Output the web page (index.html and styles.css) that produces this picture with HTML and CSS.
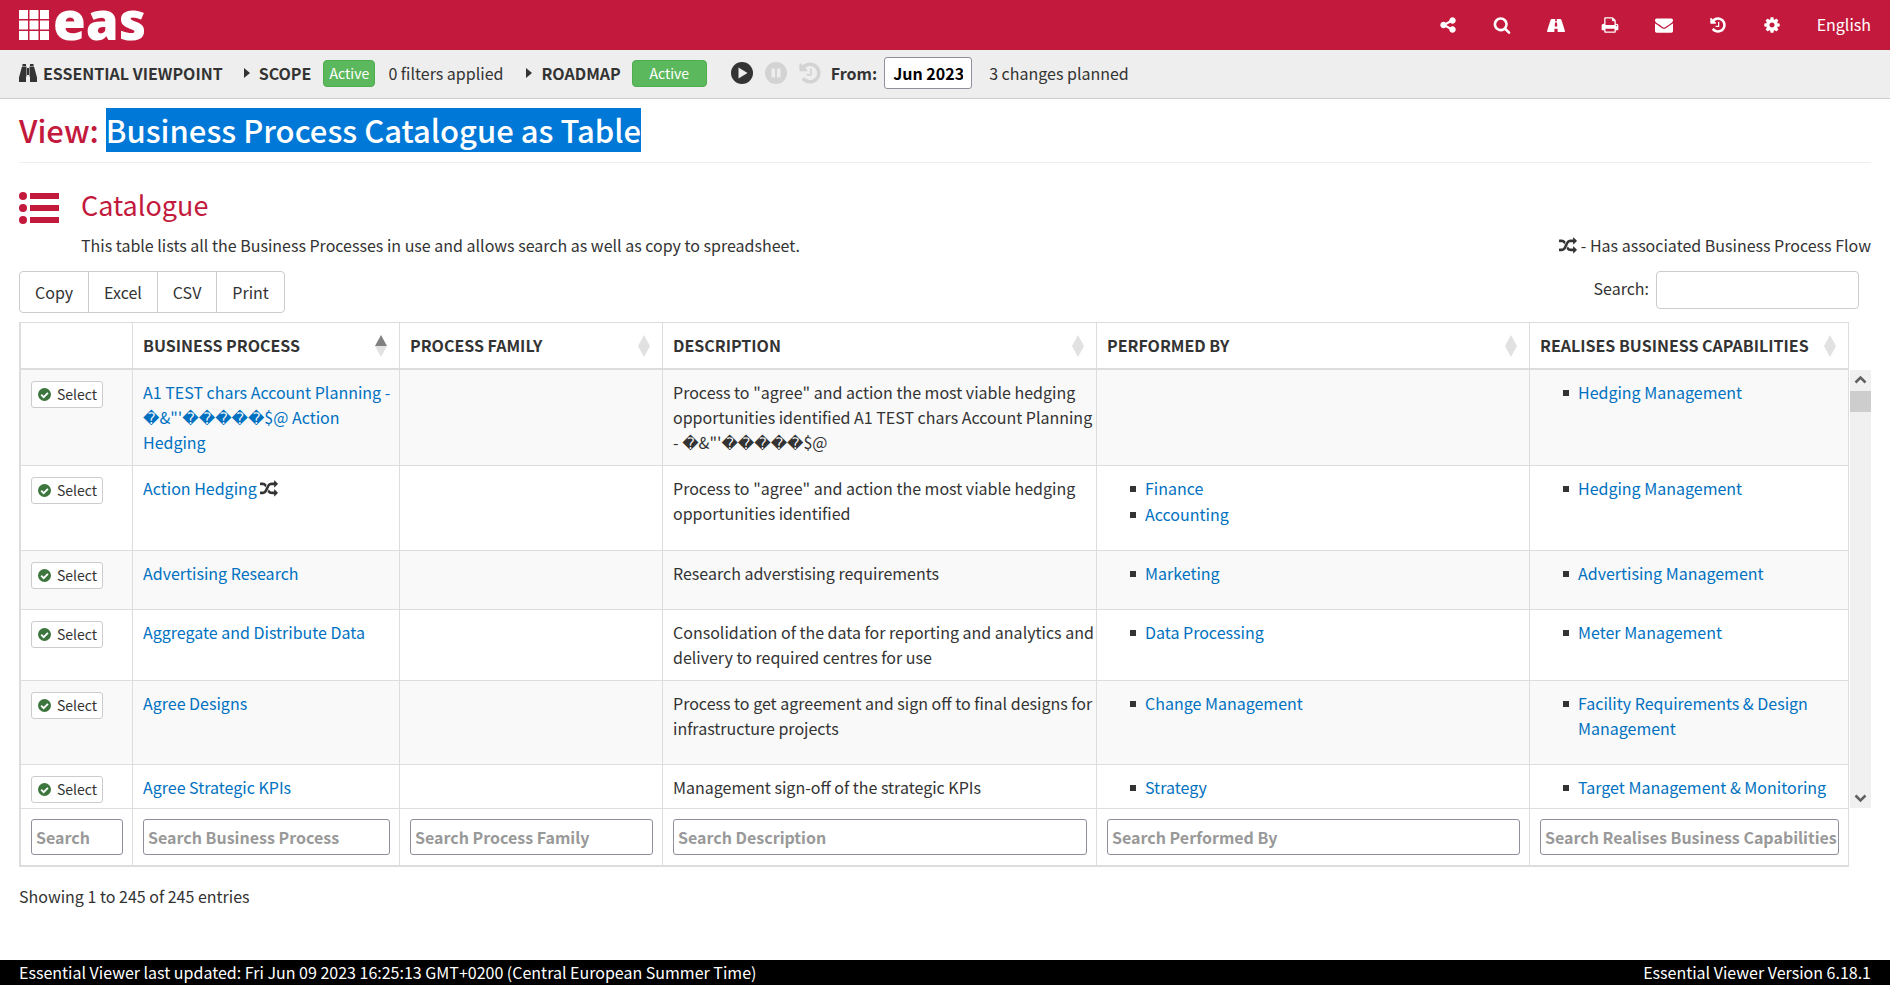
FILE: index.html
```html
<!DOCTYPE html>
<html lang="en">
<head>
<meta charset="utf-8">
<title>Business Process Catalogue as Table</title>
<link rel="stylesheet" href="styles.css">
</head>
<body>
<svg class="sprite" aria-hidden="true">
  <symbol id="share" viewBox="0 0 1792 1792"><path d="M1344 1024q133 0 226.5 93.5t93.5 226.5-93.5 226.5-226.5 93.5-226.5-93.5-93.5-226.5q0-12 2-34l-360-180q-92 86-218 86-133 0-226.5-93.5t-93.5-226.5 93.5-226.5 226.5-93.5q126 0 218 86l360-180q-2-22-2-34 0-133 93.5-226.5t226.5-93.5 226.5 93.5 93.5 226.5-93.5 226.5-226.5 93.5q-126 0-218-86l-360 180q2 22 2 34t-2 34l360 180q92-86 218-86z"/></symbol>
  <symbol id="search" viewBox="0 0 1792 1792"><path d="M1216 832q0-185-131.5-316.5t-316.5-131.5-316.5 131.5-131.5 316.5 131.5 316.5 316.5 131.5 316.5-131.5 131.5-316.5zm512 832q0 52-38 90t-90 38q-54 0-90-38l-343-342q-179 124-399 124-143 0-273.5-55.5t-225-150-150-225-55.5-273.5 55.5-273.5 150-225 225-150 273.5-55.5 273.5 55.5 225 150 150 225 55.5 273.5q0 220-124 399l343 343q37 37 37 90z"/></symbol>
  <symbol id="road" viewBox="0 0 18 18"><path fill-rule="evenodd" d="M4.600 3h3.700l-.2 2.200h1.800L9.700 3h3.700q.7 0 1 .8l3.400 10.600q.4 1.600-.7 1.600h-6.400l-.2-3.200h-3L7.300 16H.9q-1.100 0-.7-1.600L3.600 3.800q.3-.8 1-.8zM8 6.600l-.3 3.800h2.600L10 6.600z"/></symbol>
  <symbol id="print" viewBox="0 0 1792 1792"><path d="M448 1536h896v-256h-896v256zm0-640h896v-384h-160q-40 0-68-28t-28-68v-160h-640v640zm1152 64q0-26-19-45t-45-19-45 19-19 45 19 45 45 19 45-19 19-45zm128 0v416q0 13-9.500 22.500t-22.500 9.500h-224v160q0 40-28 68t-68 28h-960q-40 0-68-28t-28-68v-160h-224q-13 0-22.500-9.500t-9.500-22.500v-416q0-79 56.500-135.500t135.500-56.500h64v-544q0-40 28-68t68-28h672q40 0 88 20t76 48l152 152q28 28 48 76t20 88v256h64q79 0 135.500 56.500t56.500 135.500z"/></symbol>
  <symbol id="mail" viewBox="0 0 1792 1792"><path d="M1792 710v794q0 66-47 113t-113 47h-1472q-66 0-113-47t-47-113v-794q44 49 101 87 362 246 497 345 57 42 92.500 65.500t94.500 48 110 24.500h2q51 0 110-24.500t94.500-48 92.500-65.500q170-123 498-345 57-39 100-87zm0-294q0 79-49 151t-122 123q-376 261-468 325-10 7-42.500 31t-54 38.500-52 32.500-57.500 27-50 9h-2q-23 0-50-9t-57.500-27-52-32.500-54-38.500-42.500-31q-91-64-262-182.500t-205-142.500q-62-42-117-115.500t-55-136.500q0-78 41.500-130t118.500-52h1472q65 0 112.500 47t47.500 113z"/></symbol>
  <symbol id="history" viewBox="0 0 1792 1792"><path d="M1664 896q0 156-61 298t-164 245-245 164-298 61q-172 0-327-72.500t-264-204.500q-7-10-6.500-22.500t8.500-20.500l137-138q10-9 25-9 16 2 23 12 73 95 179 147t225 52q104 0 198.500-40.500t163.500-109.500 109.500-163.500 40.500-198.500-40.500-198.500-109.500-163.500-163.500-109.500-198.500-40.500q-98 0-188 35.500t-160 101.500l137 138q31 30 14 69-17 40-59 40h-448q-26 0-45-19t-19-45v-448q0-42 40-59 39-17 69 14l130 129q107-101 244.500-156.500t284.500-55.500q156 0 298 61t245 164 164 245 61 298zm-640-288v448q0 14-9 23t-23 9h-320q-14 0-23-9t-9-23v-64q0-14 9-23t23-9h224v-352q0-14 9-23t23-9h64q14 0 23 9t9 23z"/></symbol>
  <symbol id="cog" viewBox="0 0 1792 1792"><path d="M1152 896q0-106-75-181t-181-75-181 75-75 181 75 181 181 75 181-75 75-181zm512-109v222q0 12-8 23t-20 13l-185 28q-19 54-39 91 35 50 107 138 10 12 10 25t-9 23q-27 37-99 108t-94 71q-12 0-26-9l-138-108q-44 23-91 38-16 136-29 186-7 28-36 28h-222q-14 0-24.500-8.500t-11.500-21.500l-28-184q-49-16-90-37l-141 107q-10 9-25 9-14 0-25-11-126-114-165-168-7-10-7-23 0-12 8-23 15-21 51-66.500t54-70.500q-27-50-41-99l-183-27q-13-2-21-12.500t-8-23.500v-222q0-12 8-23t19-13l186-28q14-46 39-92-40-57-107-138-10-12-10-24 0-10 9-23 26-36 98.500-107.500t94.500-71.500q13 0 26 10l138 107q44-23 91-38 16-136 29-186 7-28 36-28h222q14 0 24.500 8.500t11.500 21.500l28 184q49 16 90 37l142-107q9-9 24-9 13 0 25 10 129 119 165 170 7 8 7 22 0 12-8 23-15 21-51 66.500t-54 70.500q26 50 41 98l183 28q13 2 21 12.500t8 23.500z"/></symbol>
  <symbol id="random" viewBox="0 0 1792 1792"><path d="M666 481q-60 92-137 273-22-45-37-72.500t-40.500-63.500-51-56.500-63-35-81.500-14.500h-224q-14 0-23-9t-9-23v-192q0-14 9-23t23-9h224q250 0 410 225zm1126 799q0 14-9 23l-320 320q-9 9-23 9-13 0-22.500-9.500t-9.500-22.500v-192q-32 0-85 .5t-81 1-73-1-71-5-64-10.500-63-18.500-58-28.500-59-40-55-53.500-56-69.500q59-93 136-273 22 45 37 72.500t40.500 63.500 51 56.500 63 35 81.500 14.500h256v-192q0-14 9-23t23-9q12 0 24 10l319 319q9 9 9 23zm0-896q0 14-9 23l-320 320q-9 9-23 9-13 0-22.500-9.500t-9.500-22.500v-192h-256q-48 0-87 15t-69 45-51 61.500-45 77.500q-32 62-78 171-29 66-49.500 111t-54 105-64 100-74 83-90 68.500-106.500 42-128 16.500h-224q-14 0-23-9t-9-23v-192q0-14 9-23t23-9h224q48 0 87-15t69-45 51-61.500 45-77.500q32-62 78-171 29-66 49.500-111t54-105 64-100 74-83 90-68.500 106.500-42 128-16.500h256v-192q0-14 9-23t23-9q12 0 24 10l319 319q9 9 9 23z"/></symbol>
  <symbol id="check" viewBox="0 0 14 14"><circle cx="7" cy="7" r="7"/><path d="M3.400 7.200l2.700 2.700 4.600-4.700" fill="none" stroke="#fff" stroke-width="2"/></symbol>
  <symbol id="binoculars" viewBox="0 0 18 18"><path d="M3.500 0h3.500v2H3.500zM11 0h3.500v2H11zM3 2.600h4.500v10H7V18H0v-4.500zM10.500 2.600H15l3 10.900V18h-7v-5.400h-.5zM8 4h2v7H8z"/></symbol>
  <symbol id="play" viewBox="0 0 22 22"><circle cx="11" cy="11" r="11"/><path d="M7.500 5.500v11l9-5.500z" fill="#eee"/></symbol>
  <symbol id="pause" viewBox="0 0 22 22"><circle cx="11" cy="11" r="11"/><path d="M6.500 6.500H10v9H6.500zM12 6.500h3.500v9H12z" fill="#eee"/></symbol>
  <symbol id="list" viewBox="0 0 40 32"><circle cx="4" cy="4" r="4"/><circle cx="4" cy="16" r="4"/><circle cx="4" cy="28" r="4"/><path d="M11 1h29v6H11zM11 13h29v6H11zM11 25h29v6H11z"/></symbol>
</svg>

<header class="topbar">
  <a class="logo" href="#" aria-label="eas home">
    <svg class="logo-grid" viewBox="0 0 30 30" aria-hidden="true"><path d="M0 0h9v9H0zM10.500 0h9v9h-9zM21 0h9v9h-9zM0 10.500h9v9H0zM10.500 10.500h9v9h-9zM21 10.500h9v9h-9zM0 21h9v9H0zM10.500 21h9v9h-9zM21 21h9v9h-9z"/></svg>
    <span class="logo-text">eas</span>
  </a>
  <nav class="topnav">
    <a href="#" aria-label="Share"><svg class="icon"><use href="#share"/></svg></a>
    <a href="#" aria-label="Search"><svg class="icon"><use href="#search"/></svg></a>
    <a href="#" aria-label="Roadmap"><svg class="icon"><use href="#road"/></svg></a>
    <a href="#" aria-label="Print"><svg class="icon"><use href="#print"/></svg></a>
    <a href="#" aria-label="Mail"><svg class="icon"><use href="#mail"/></svg></a>
    <a href="#" aria-label="History"><svg class="icon"><use href="#history"/></svg></a>
    <a href="#" aria-label="Settings"><svg class="icon"><use href="#cog"/></svg></a>
    <a href="#">English</a>
  </nav>
</header>

<section class="viewbar">
  <svg class="icon"><use href="#binoculars"/></svg>
  <strong class="viewbar-title">ESSENTIAL VIEWPOINT</strong>
  <span class="caret"></span>
  <strong class="scope">SCOPE</strong>
  <button class="active-btn">Active</button>
  <span class="filters">0 filters applied</span>
  <span class="caret"></span>
  <strong class="roadmap">ROADMAP</strong>
  <button class="active-btn wide">Active</button>
  <div class="player">
    <button aria-label="Play"><svg><use href="#play"/></svg></button>
    <button class="off" aria-label="Pause"><svg><use href="#pause"/></svg></button>
    <button class="off" aria-label="Reset"><svg viewBox="1 1 16 16"><use href="#history" width="18" height="18"/></svg></button>
  </div>
  <label class="from" for="from">From:</label>
  <input class="date" id="from" value="Jun 2023">
  <span>3 changes planned</span>
</section>

<main>
  <h1><span>View: </span><mark>Business Process Catalogue as Table</mark></h1>
  <section class="intro">
    <svg class="list-icon"><use href="#list"/></svg>
    <div class="intro-body">
      <h2>Catalogue</h2>
      <div class="intro-line">
        <p>This table lists all the Business Processes in use and allows search as well as copy to spreadsheet.</p>
        <p class="legend"><svg class="icon"><use href="#random"/></svg> - Has associated Business Process Flow</p>
      </div>
    </div>
  </section>

  <div class="tools">
    <div class="btn-group"><button>Copy</button><button>Excel</button><button>CSV</button><button>Print</button></div>
    <label class="search">Search: <input type="search"></label>
  </div>

  <div class="grid">
    <div class="scroller">
    <table>
      <colgroup><col class="c1"><col class="c2"><col class="c3"><col class="c4"><col class="c5"><col class="c6"></colgroup>
      <thead>
        <tr>
          <th></th>
          <th><div class="head">BUSINESS PROCESS<span class="sort asc"></span></div></th>
          <th><div class="head">PROCESS FAMILY<span class="sort"></span></div></th>
          <th><div class="head">DESCRIPTION<span class="sort"></span></div></th>
          <th><div class="head">PERFORMED BY<span class="sort"></span></div></th>
          <th><div class="head">REALISES BUSINESS CAPABILITIES<span class="sort"></span></div></th>
        </tr>
      </thead>
      <tbody>
        <tr>
          <td><button class="select"><svg><use href="#check"/></svg>Select</button></td>
          <td><a href="#">A1 TEST chars Account Planning - �&amp;"'�����$@ Action Hedging</a></td>
          <td></td>
          <td>Process to "agree" and action the most viable hedging opportunities identified A1 TEST chars Account Planning - �&amp;"'�����$@</td>
          <td></td>
          <td><ul><li><a href="#">Hedging Management</a></li></ul></td>
        </tr>
        <tr>
          <td><button class="select"><svg><use href="#check"/></svg>Select</button></td>
          <td><a href="#">Action Hedging</a> <svg class="icon flow"><use href="#random"/></svg></td>
          <td></td>
          <td>Process to "agree" and action the most viable hedging opportunities identified</td>
          <td><ul><li><a href="#">Finance</a></li><li><a href="#">Accounting</a></li></ul></td>
          <td><ul><li><a href="#">Hedging Management</a></li></ul></td>
        </tr>
        <tr>
          <td><button class="select"><svg><use href="#check"/></svg>Select</button></td>
          <td><a href="#">Advertising Research</a></td>
          <td></td>
          <td>Research adverstising requirements</td>
          <td><ul><li><a href="#">Marketing</a></li></ul></td>
          <td><ul><li><a href="#">Advertising Management</a></li></ul></td>
        </tr>
        <tr>
          <td><button class="select"><svg><use href="#check"/></svg>Select</button></td>
          <td><a href="#">Aggregate and Distribute Data</a></td>
          <td></td>
          <td>Consolidation of the data for reporting and analytics and delivery to required centres for use</td>
          <td><ul><li><a href="#">Data Processing</a></li></ul></td>
          <td><ul><li><a href="#">Meter Management</a></li></ul></td>
        </tr>
        <tr>
          <td><button class="select"><svg><use href="#check"/></svg>Select</button></td>
          <td><a href="#">Agree Designs</a></td>
          <td></td>
          <td>Process to get agreement and sign off to final designs for infrastructure projects</td>
          <td><ul><li><a href="#">Change Management</a></li></ul></td>
          <td><ul><li><a href="#">Facility Requirements &amp; Design Management</a></li></ul></td>
        </tr>
        <tr class="last">
          <td><button class="select"><svg><use href="#check"/></svg>Select</button></td>
          <td><a href="#">Agree Strategic KPIs</a></td>
          <td></td>
          <td>Management sign-off of the strategic KPIs</td>
          <td><ul><li><a href="#">Strategy</a></li></ul></td>
          <td><ul><li><a href="#">Target Management &amp; Monitoring</a></li></ul></td>
        </tr>
      </tbody>
      <tfoot>
        <tr>
          <th><input aria-label="Search" placeholder="Search"></th>
          <th><input aria-label="Search Business Process" placeholder="Search Business Process"></th>
          <th><input aria-label="Search Process Family" placeholder="Search Process Family"></th>
          <th><input aria-label="Search Description" placeholder="Search Description"></th>
          <th><input aria-label="Search Performed By" placeholder="Search Performed By"></th>
          <th><input aria-label="Search Realises Business Capabilities" placeholder="Search Realises Business Capabilities"></th>
        </tr>
      </tfoot>
    </table>
    </div>
    <div class="scrollbar" aria-hidden="true">
      <svg viewBox="0 0 21 21"><path d="M5.500 12.500l5-5 5 5"/></svg>
      <div class="thumb"></div>
      <svg class="down" viewBox="0 0 21 21"><path d="M5.500 8.500l5 5 5-5"/></svg>
    </div>
  </div>
  <p class="info">Showing 1 to 245 of 245 entries</p>
</main>

<footer class="footer">
  <span>Essential Viewer last updated: Fri Jun 09 2023 16:25:13 GMT+0200 (Central European Summer Time)</span>
  <span>Essential Viewer Version 6.18.1</span>
</footer>
</body>
</html>
```
FILE: styles.css
```css
* { box-sizing: border-box; }
body {
  margin: 0;
  min-height: 100vh;
  display: flex;
  flex-direction: column;
  font-family: "Noto Sans CJK SC", "DejaVu Sans", sans-serif;
  font-size: 16px;
  line-height: 25px;
  color: #333;
  background: #fff;
}
button, input { font: inherit; color: inherit; margin: 0; }
a { color: #0071c1; text-decoration: none; }
p, h1, h2, ul { margin: 0; }
svg { fill: currentColor; }
.sprite { display: none; }
.icon { width: 18px; height: 18px; flex: none; }

.topbar {
  height: 50px;
  padding: 0 19px;
  display: flex;
  justify-content: space-between;
  background: #c3193c;
  color: #fff;
}
.topbar a { color: #fff; }
.logo { display: flex; align-items: flex-end; gap: 4px; height: 40px; }
.logo-grid { width: 30px; height: 30px; }
.logo-text { font-family: "Open Sans", sans-serif; font-weight: 800; font-size: 53px; line-height: 40px; }
.topnav { display: flex; align-items: center; gap: 36px; height: 49px; }
.topnav a { display: flex; }

.viewbar {
  height: 49px;
  padding: 0 19px 2px;
  display: flex;
  align-items: center;
  background: #eee;
  border-bottom: 1px solid #ccc;
}
.viewbar-title { margin: 0 21px 0 6px; }
.caret { border: 5px solid transparent; border-left: 6px solid #333; border-right: 0; margin-right: 9px; }
.active-btn {
  height: 27px;
  width: 52px;
  padding: 0;
  border: 1px solid #4cae4c;
  border-radius: 4px;
  background: #5cb85c;
  color: #fff;
  font-size: 14px;
  line-height: 20px;
}
.active-btn.wide { width: 75px; }
.scope { margin-right: 12px; }
.filters { margin: 0 23px 0 13px; }
.roadmap { margin-right: 11px; }
.player { display: flex; gap: 12px; margin: 0 10px 0 24px; }
.player button { padding: 0; border: 0; background: none; display: flex; }
.player svg { width: 22px; height: 22px; }
.player .off { color: #d3d3d3; }
.from { font-weight: bold; margin-right: 7px; }
.date {
  width: 88px;
  height: 32px;
  padding: 0 8px;
  margin-right: 17px;
  border: 1px solid #8f8f9d;
  border-radius: 3px;
  background: #fff;
  color: #000;
  font-weight: bold;
}

main { flex: 1; padding: 9px 19px 0; }
h1 {
  padding-bottom: 10px;
  border-bottom: 1px solid #eee;
  font-size: 31px;
  line-height: 44px;
  font-weight: 500;
  color: #c3193c;
}
mark { display: inline-block; background: #0078d7; color: #fff; }
.intro { display: flex; margin-top: 24px; color: #c3193c; }
.list-icon { width: 40px; height: 32px; margin: 5px 22px 0 0; }
.intro-body { flex: 1; }
h2 { font-size: 27px; line-height: 36px; font-weight: 400; }
.intro-line { display: flex; justify-content: space-between; color: #333; margin-top: 10px; }
.legend { display: flex; align-items: center; gap: 4px; }

.tools { display: flex; justify-content: space-between; margin-top: 13px; }
.btn-group { display: flex; }
.btn-group button {
  height: 42px;
  padding: 0 15px;
  border: 1px solid #ccc;
  background: #fff;
}
.btn-group button + button { margin-left: -1px; }
.btn-group button:first-child { border-radius: 4px 0 0 4px; }
.btn-group button:last-child { border-radius: 0 4px 4px 0; }
.search { display: flex; gap: 7px; margin-right: 12px; line-height: 34px; }
.search input {
  width: 203px;
  height: 38px;
  border: 1px solid #ccc;
  border-radius: 4px;
  padding: 0 8px;
}

.grid { display: flex; margin-top: 9px; }
.scroller { flex: 1; }
table {
  width: 100%;
  table-layout: fixed;
  border-collapse: separate;
  border-spacing: 0;
  border: solid #ddd;
  border-width: 1px 0 1px 1px;
}
.c1 { width: 113px; }
.c2 { width: 267px; }
.c3 { width: 263px; }
.c4 { width: 434px; }
.c5 { width: 433px; }
th, td {
  padding: 10px;
  border: solid #ddd;
  border-width: 0 1px 1px 0;
  vertical-align: top;
  text-align: left;
}
td { padding-right: 2px; }
th:first-child, td:first-child { border-left: 1px solid #ddd; }
thead th { border-bottom-width: 2px; height: 47px; }
.head { display: flex; justify-content: space-between; align-items: center; white-space: nowrap; }
.sort { width: 12px; height: 22px; margin-right: 2px; }
.sort::before, .sort::after { content: ""; display: block; border: solid transparent; border-width: 0 6px 11px; border-bottom-color: #e1e1e1; }
.sort::after { border-width: 11px 6px 0; border-top-color: #e1e1e1; }
.sort.asc::before { border-bottom-color: #808080; }
tbody tr:nth-child(odd) { background: #f9f9f9; }
ul { padding: 0 0 0 23px; margin-bottom: 12px; list-style: none; }
li { display: flex; padding-bottom: 1px; }
li::before { content: ""; flex: none; width: 6px; height: 6px; margin: 10px 9px 0 0; background: #333; }
.last td { height: 44px; padding-bottom: 0; }
.last ul { margin-bottom: 0; }
.select {
  width: 72px;
  height: 27px;
  margin-top: 1px;
  padding: 0 6px;
  display: flex;
  align-items: center;
  gap: 6px;
  border: 1px solid #ccc;
  border-radius: 3px;
  background: #fff;
  font-size: 14px;
}
.select svg { width: 13px; height: 13px; color: #3c763d; flex: none; }
.flow { vertical-align: -3px; }
tfoot th { padding-right: 9px; }
tfoot input {
  display: block;
  width: 100%;
  height: 36px;
  padding: 0 0 0 4px;
  border: 1px solid #8f8f9d;
  border-radius: 3px;
  background: #fff;
  font-weight: bold;
}
tfoot input::placeholder { color: #999; opacity: 1; }
.scrollbar {
  width: 21px;
  margin: 48px 0 59px 1px;
  display: flex;
  flex-direction: column;
  background: #f0f0f0;
}
.scrollbar svg { width: 21px; height: 21px; fill: none; stroke: #606060; stroke-width: 2.500; }
.scrollbar .down { margin-top: auto; }
.thumb { height: 21px; background: #cdcdcd; }
.info { margin-top: 17px; }

.footer {
  height: 25px;
  padding: 0 19px;
  display: flex;
  justify-content: space-between;
  background: #000;
  color: #fff;
}
```
